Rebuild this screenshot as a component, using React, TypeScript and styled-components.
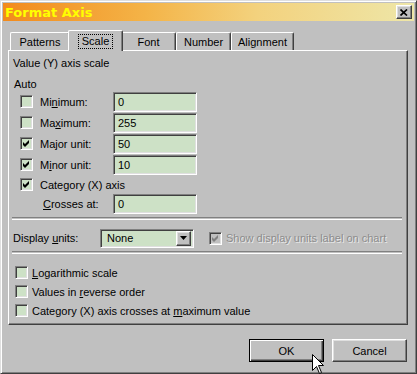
import React from 'react';
import styled, { createGlobalStyle, css } from 'styled-components';

const GlobalStyle = createGlobalStyle`
  html, body {
    margin: 0;
    padding: 0;
    background: #c0c0c0;
  }
  body {
    font-family: "Liberation Sans", Arial, sans-serif;
    font-size: 11px;
    color: #000;
  }
`;

const sunken = css`
  box-sizing: border-box;
  border: 1px solid;
  border-color: #808080 #fff #fff #808080;
  box-shadow: inset 1px 1px 0 #404040, inset -1px -1px 0 #dfdfdf;
`;

const raised = css`
  box-sizing: border-box;
  border: 1px solid;
  border-color: #fff #404040 #404040 #fff;
  box-shadow: inset -1px -1px 0 #808080, inset 1px 1px 0 #dfdfdf;
`;

const Window = styled.div`
  position: relative;
  box-sizing: border-box;
  width: 417px;
  height: 374px;
  padding: 2px;
  border: 1px solid;
  border-color: #dfdfdf #404040 #404040 #dfdfdf;
  box-shadow: inset 1px 1px 0 #fff, inset -1px -1px 0 #808080;
  background: #c0c0c0;
  display: flex;
  flex-direction: column;
`;

const TitleBar = styled.div`
  height: 18px;
  display: flex;
  align-items: center;
  justify-content: space-between;
  padding: 0 2px;
  background: linear-gradient(90deg, #f28a1c 0%, #f4b448 35%, #f3d27e 62%, #eee6a8 100%);
`;

const Title = styled.span`
  font-family: "DejaVu Sans", Verdana, sans-serif;
  font-weight: bold;
  font-size: 13px;
  color: #ffff00;
`;

const CloseButton = styled.div`
  ${raised};
  width: 16px;
  height: 14px;
  background: #c0c0c0;
  display: flex;
  align-items: center;
  justify-content: center;
`;

const Body = styled.div`
  flex: 1;
  display: flex;
  flex-direction: column;
  padding: 9px 6px 0 5px;
`;

const TabStrip = styled.div`
  display: flex;
  align-items: flex-end;
  height: 20px;
  padding-left: 2px;
`;

const Tab = styled.div<{ $w: number; $active?: boolean }>`
  position: relative;
  box-sizing: border-box;
  width: ${(p) => p.$w + (p.$active ? 4 : 0)}px;
  height: ${(p) => (p.$active ? 21 : 18)}px;
  margin: 0 ${(p) => (p.$active ? -2 : 0)}px ${(p) => (p.$active ? -1 : 0)}px;
  z-index: ${(p) => (p.$active ? 2 : 1)};
  border-top: 1px solid #fff;
  border-left: 1px solid #fff;
  border-right: 1px solid #404040;
  border-radius: 2px 2px 0 0;
  box-shadow: inset -1px 0 0 #808080;
  background: #c0c0c0;
  display: flex;
  align-items: center;
  justify-content: center;
  padding-top: ${(p) => (p.$active ? 1 : 0)}px;
`;

const FocusLabel = styled.span`
  border: 1px dotted #000;
  padding: 0 3px 1px;
`;

const Panel = styled.div`
  box-sizing: border-box;
  height: 275px;
  border: 1px solid;
  border-color: #fff #404040 #404040 #fff;
  box-shadow: inset -1px -1px 0 #808080;
  display: flex;
  flex-direction: column;
`;

const Heading = styled.div<{ $left: number; $top: number }>`
  height: 14px;
  line-height: 14px;
  margin: ${(p) => p.$top}px 0 0 ${(p) => p.$left}px;
`;

const Row = styled.div<{ $h: number; $left: number; $top?: number }>`
  display: flex;
  align-items: center;
  height: ${(p) => p.$h}px;
  margin: ${(p) => p.$top || 0}px 0 0 ${(p) => p.$left}px;
`;

const CheckSlot = styled.div<{ $w: number }>`
  width: ${(p) => p.$w}px;
  flex: none;
  display: flex;
  align-items: center;
`;

const Box = styled.div<{ $disabled?: boolean }>`
  ${sunken};
  width: 13px;
  height: 13px;
  background: ${(p) => (p.$disabled ? '#c0c0c0' : '#cde1c6')};
  display: flex;
  align-items: center;
  justify-content: center;
`;

const Label = styled.span<{ $w?: number; $disabled?: boolean }>`
  ${(p) => (p.$w ? `width: ${p.$w}px; flex: none;` : '')}
  white-space: nowrap;
  color: ${(p) => (p.$disabled ? '#8c8c8c' : '#000')};
  ${(p) => (p.$disabled ? 'text-shadow: 1px 1px 0 #e8e8e8;' : '')}
`;

const U = styled.span`
  text-decoration: underline;
`;

const Field = styled.div`
  ${sunken};
  width: 84px;
  height: 20px;
  background: #cde1c6;
  padding: 0 4px;
  display: flex;
  align-items: center;
`;

const Separator = styled.div<{ $top: number }>`
  height: 1px;
  margin: ${(p) => p.$top}px 5px 0 3px;
  border-top: 1px solid #808080;
  border-bottom: 1px solid #fff;
`;

const Combo = styled.div`
  ${sunken};
  width: 94px;
  height: 19px;
  flex: none;
  background: #cde1c6;
  display: flex;
  align-items: center;
  justify-content: space-between;
  padding: 2px 2px 2px 6px;
  margin-right: 15px;
`;

const ComboButton = styled.div`
  ${raised};
  width: 15px;
  height: 15px;
  background: #c0c0c0;
  display: flex;
  align-items: center;
  justify-content: center;
`;

const ButtonRow = styled.div`
  display: flex;
  justify-content: flex-end;
  gap: 8px;
  margin: 14px 1px 0 0;
`;

const Button = styled.div<{ $default?: boolean }>`
  ${raised};
  width: 75px;
  height: 23px;
  background: #c0c0c0;
  display: flex;
  align-items: center;
  justify-content: center;
  ${(p) =>
    p.$default &&
    css`
      border-color: #000;
      box-shadow: inset 1px 1px 0 #fff, inset -1px -1px 0 #404040, inset -2px -2px 0 #808080;
    `}
`;

const Pointer = styled.svg`
  position: absolute;
  left: 311px;
  top: 353px;
`;

const Check = ({ color = '#000' }: { color?: string }) => (
  <svg width="9" height="9" viewBox="0 0 9 9">
    <polygon points="1,3 3,5 7,1 7,4 3,8 1,6" fill={color} />
  </svg>
);

const CheckBox = ({ checked, disabled }: { checked?: boolean; disabled?: boolean }) => (
  <Box $disabled={disabled}>{checked && <Check color={disabled ? '#808080' : '#000'} />}</Box>
);

const tabs = [
  { name: 'Patterns', w: 60 },
  { name: 'Scale', w: 51, active: true },
  { name: 'Font', w: 55 },
  { name: 'Number', w: 55 },
  { name: 'Alignment', w: 63 },
];

export default function App() {
  return (
    <>
      <GlobalStyle />
      <Window>
        <TitleBar>
          <Title>Format Axis</Title>
          <CloseButton>
            <svg width="8" height="7" viewBox="0 0 8 7">
              <path d="M0.5 0.5 L7 6.5 M7 0.5 L0.5 6.5" stroke="#000" strokeWidth="1.7" />
            </svg>
          </CloseButton>
        </TitleBar>
        <Body>
          <TabStrip>
            {tabs.map((t) => (
              <Tab key={t.name} $w={t.w} $active={t.active}>
                {t.active ? <FocusLabel>{t.name}</FocusLabel> : t.name}
              </Tab>
            ))}
          </TabStrip>
          <Panel>
            <Heading $left={4} $top={5}>Value (Y) axis scale</Heading>
            <Heading $left={5} $top={7}>Auto</Heading>
            <Row $h={21} $left={11}>
              <CheckSlot $w={20}><CheckBox /></CheckSlot>
              <Label $w={73}>Mi<U>n</U>imum:</Label>
              <Field>0</Field>
            </Row>
            <Row $h={21} $left={11}>
              <CheckSlot $w={20}><CheckBox /></CheckSlot>
              <Label $w={73}>Ma<U>x</U>imum:</Label>
              <Field>255</Field>
            </Row>
            <Row $h={21} $left={11}>
              <CheckSlot $w={20}><CheckBox checked /></CheckSlot>
              <Label $w={73}>Ma<U>j</U>or unit:</Label>
              <Field>50</Field>
            </Row>
            <Row $h={21} $left={11}>
              <CheckSlot $w={20}><CheckBox checked /></CheckSlot>
              <Label $w={73}>M<U>i</U>nor unit:</Label>
              <Field>10</Field>
            </Row>
            <Row $h={19} $left={11}>
              <CheckSlot $w={20}><CheckBox checked /></CheckSlot>
              <Label>Category (X) axis</Label>
            </Row>
            <Row $h={20} $left={34}>
              <Label $w={70}><U>C</U>rosses at:</Label>
              <Field>0</Field>
            </Row>
            <Separator $top={3} />
            <Row $h={20} $left={4} $top={8}>
              <Label $w={87}>Display <U>u</U>nits:</Label>
              <Combo>
                None
                <ComboButton>
                  <svg width="7" height="4" viewBox="0 0 7 4">
                    <polygon points="0,0 7,0 3.5,4" fill="#000" />
                  </svg>
                </ComboButton>
              </Combo>
              <CheckSlot $w={17}><CheckBox checked disabled /></CheckSlot>
              <Label $disabled>Show display units label on chart</Label>
            </Row>
            <Separator $top={3} />
            <Row $h={19} $left={6} $top={9}>
              <CheckSlot $w={17}><CheckBox /></CheckSlot>
              <Label><U>L</U>ogarithmic scale</Label>
            </Row>
            <Row $h={19} $left={6}>
              <CheckSlot $w={17}><CheckBox /></CheckSlot>
              <Label>Values in <U>r</U>everse order</Label>
            </Row>
            <Row $h={19} $left={6}>
              <CheckSlot $w={17}><CheckBox /></CheckSlot>
              <Label>Category (X) axis crosses at <U>m</U>aximum value</Label>
            </Row>
          </Panel>
          <ButtonRow>
            <Button $default>OK</Button>
            <Button>Cancel</Button>
          </ButtonRow>
        </Body>
        <Pointer width="12" height="21" viewBox="0 0 12 21">
          <path
            d="M0.5 0.5 L0.5 16.5 L4.5 12.5 L7.5 19.5 L9.5 18.5 L6.5 11.5 L11.5 11.5 Z"
            fill="#fff"
            stroke="#000"
            strokeWidth="1"
          />
        </Pointer>
      </Window>
    </>
  );
}
